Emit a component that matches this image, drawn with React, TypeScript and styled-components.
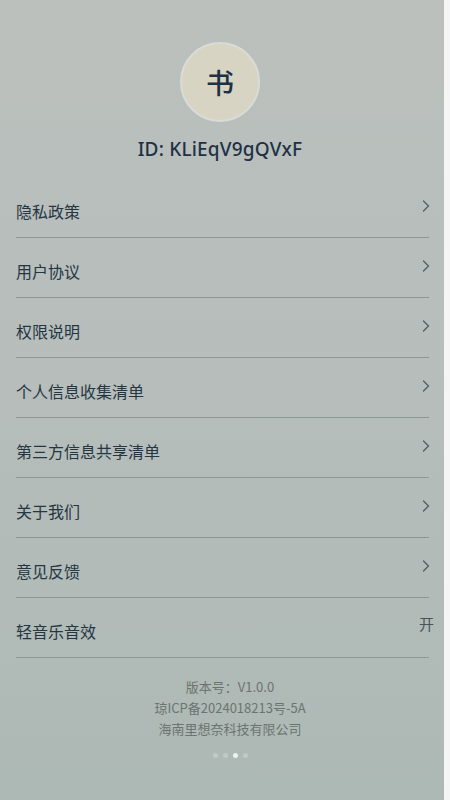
import React from 'react';
import styled, {createGlobalStyle} from 'styled-components';

const GlobalStyle = createGlobalStyle`
  html, body {
    margin: 0;
    padding: 0;
    background: #f4f5f4;
  }
  body {
    font-family: "Noto Sans CJK SC", "Noto Sans", sans-serif;
  }
`;

const menu = [
    '隐私政策',
    '用户协议',
    '权限说明',
    '个人信息收集清单',
    '第三方信息共享清单',
    '关于我们',
    '意见反馈',
];

const Chevron: React.FC = () => (
    <svg width="8" height="12" viewBox="0 0 8 12">
        <path d="M1.5 1 L6.5 6 L1.5 11" fill="none" stroke="#4b5a60" strokeWidth="1.2" strokeLinecap="round"/>
    </svg>
);

export default function App() {
    return (
        <>
            <GlobalStyle/>
            <Page>
                <Header>
                    <Avatar>书</Avatar>
                    <UserId>ID: KLiEqV9gQVxF</UserId>
                </Header>
                <List>
                    {menu.map(item => (
                        <Row key={item}>
                            <Label>{item}</Label>
                            <Arrow><Chevron/></Arrow>
                        </Row>
                    ))}
                    <Row>
                        <Label>轻音乐音效</Label>
                        <Switch>开</Switch>
                    </Row>
                </List>
                <Footer>
                    <FootLine>版本号：V1.0.0</FootLine>
                    <FootLine>琼ICP备2024018213号-5A</FootLine>
                    <FootLine>海南里想奈科技有限公司</FootLine>
                    <Dots>
                        <Dot/>
                        <Dot/>
                        <Dot $active/>
                        <Dot/>
                    </Dots>
                </Footer>
            </Page>
        </>
    );
}

const Page = styled.div`
  width: 444px;
  height: 800px;
  box-sizing: border-box;
  background: linear-gradient(180deg, #bbc0bd 0%, #b6bdba 50%, #adb9b5 100%);
  display: flex;
  flex-direction: column;
  padding-top: 42px;
`;

const Header = styled.div`
  display: flex;
  flex-direction: column;
  align-items: center;
  padding-right: 4px;
`;

const Avatar = styled.div`
  width: 80px;
  height: 80px;
  border-radius: 50%;
  background: #d8d4c4;
  border: 2px solid #d9dcd6;
  box-sizing: border-box;
  display: flex;
  align-items: center;
  justify-content: center;
  font-size: 28px;
  font-weight: 500;
  color: #1d3245;
`;

const UserId = styled.div`
  margin-top: 14px;
  font-family: "Noto Sans", "Open Sans", sans-serif;
  font-size: 19px;
  font-weight: 500;
  color: #1d3245;
  letter-spacing: 0.2px;
`;

const List = styled.div`
  margin-top: 16px;
  display: flex;
  flex-direction: column;
  padding: 0 15px 0 16px;
`;

const Row = styled.div`
  height: 60px;
  display: flex;
  align-items: center;
  justify-content: space-between;
  border-bottom: 1px solid #8f9794;
  box-sizing: border-box;
  padding-top: 6px;
`;

const Label = styled.span`
  font-size: 16px;
  color: #243642;
`;

const Arrow = styled.span`
  display: flex;
  margin-top: -10px;
  margin-right: -1px;
`;

const Switch = styled.span`
  font-size: 15px;
  color: #4a5356;
  margin-top: -14px;
  margin-right: -5px;
`;

const Footer = styled.div`
  margin-top: 20px;
  display: flex;
  flex-direction: column;
  align-items: center;
  gap: 3px;
  padding-left: 16px;
`;

const FootLine = styled.div`
  font-size: 13px;
  line-height: 18px;
  color: #6c7471;
`;

const Dots = styled.div`
  margin-top: 12px;
  display: flex;
  gap: 5px;
`;

const Dot = styled.span<{$active?: boolean}>`
  width: 5px;
  height: 5px;
  border-radius: 50%;
  background: ${p => p.$active ? '#eef1ef' : '#c2c9c6'};
`;
